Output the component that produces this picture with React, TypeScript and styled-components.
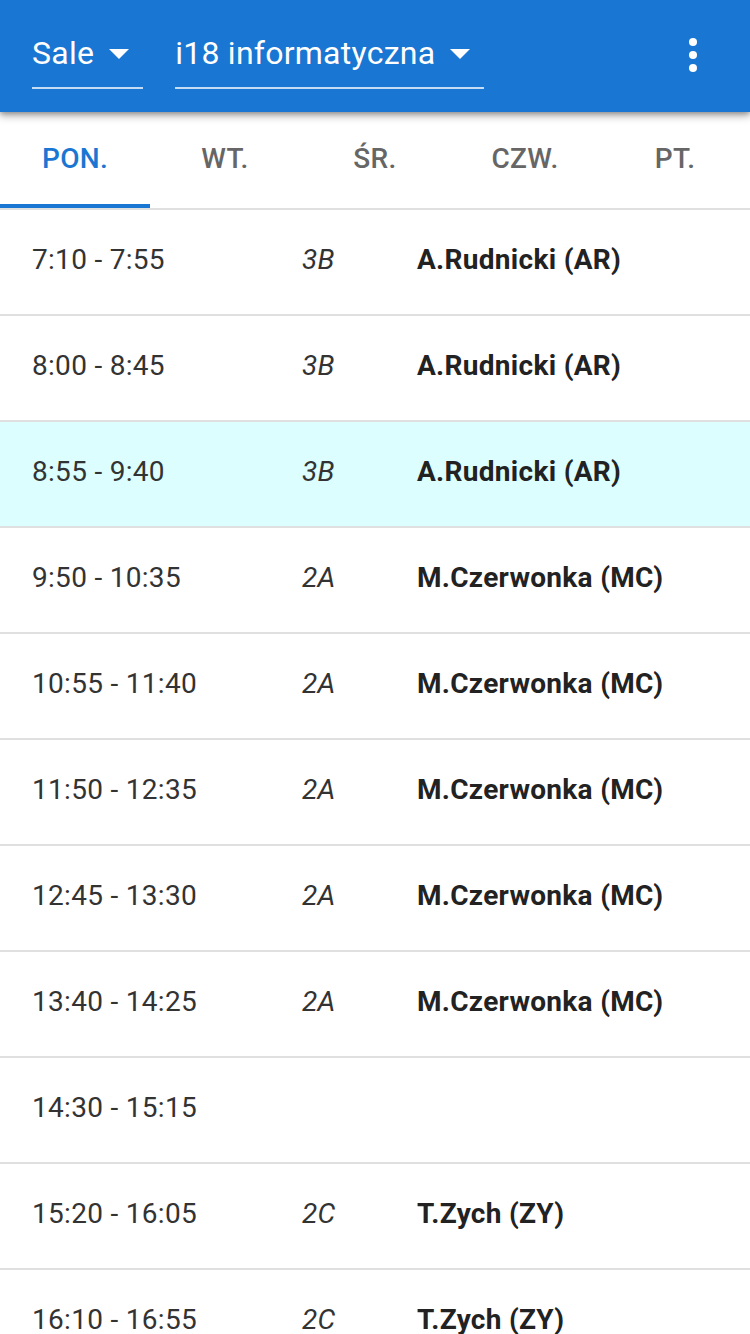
import React from "react";
import styled, { createGlobalStyle } from "styled-components";

const Global = createGlobalStyle`
  html, body { margin: 0; padding: 0; background: #fff; }
  body { font-family: Roboto, "Noto Sans", Arial, sans-serif; -webkit-font-smoothing: antialiased; }
  * { box-sizing: border-box; }
`;

const Page = styled.div`
  width: 750px;
  display: flex;
  flex-direction: column;
`;

const AppBar = styled.header`
  position: relative;
  z-index: 2;
  height: 112px;
  background: #1976d2;
  display: flex;
  align-items: center;
  padding: 0 32px;
  gap: 32px;
  box-shadow: 0 4px 8px rgba(0, 0, 0, 0.3), 0 2px 4px rgba(0, 0, 0, 0.2);
`;

const Select = styled.div`
  display: flex;
  align-items: center;
  gap: 15px;
  height: 60px;
  margin-top: 6px;
  border-bottom: 2px solid rgba(255, 255, 255, 0.75);
  padding-right: 14px;
  padding-bottom: 10px;
  color: #fff;
  font-size: 32px;
  font-weight: 400;
  letter-spacing: 0.25px;
`;

const Arrow = styled.span`
  width: 0;
  height: 0;
  border-left: 10px solid transparent;
  border-right: 10px solid transparent;
  border-top: 10px solid #fff;
  margin-top: 2px;
`;

const Spacer = styled.div`
  flex: 1;
`;

const Kebab = styled.div`
  display: flex;
  flex-direction: column;
  gap: 5px;
  margin-right: 21px;
  margin-top: -2px;
  span {
    width: 8px;
    height: 8px;
    border-radius: 50%;
    background: #fff;
  }
`;

const Tabs = styled.nav`
  display: flex;
  height: 98px;
  border-bottom: 2px solid #e0e0e0;
`;

const Tab = styled.div<{ $active?: boolean }>`
  position: relative;
  width: 150px;
  display: flex;
  align-items: center;
  justify-content: center;
  padding-bottom: 4px;
  font-size: 28px;
  font-weight: 500;
  letter-spacing: 0.3px;
  color: ${(p) => (p.$active ? "#1976d2" : "#666")};
  &::after {
    content: "";
    position: absolute;
    left: 0;
    right: 0;
    bottom: 0;
    height: 4px;
    background: ${(p) => (p.$active ? "#1976d2" : "transparent")};
  }
`;

const Row = styled.div<{ $current?: boolean }>`
  display: grid;
  grid-template-columns: 270px 115px 1fr;
  align-items: center;
  height: 106px;
  padding: 0 32px 6px 32px;
  border-bottom: 2px solid #e0e0e0;
  background: ${(p) => (p.$current ? "#dcfefe" : "#fff")};
  font-size: 28px;
  letter-spacing: 0.3px;
  color: #333;
`;

const Time = styled.span`
  font-weight: 400;
  color: #333;
`;

const Klass = styled.span`
  font-style: italic;
  color: #333;
`;

const Teacher = styled.span`
  font-weight: 700;
  color: #222;
`;

const lessons = [
  ["7:10 - 7:55", "3B", "A.Rudnicki (AR)"],
  ["8:00 - 8:45", "3B", "A.Rudnicki (AR)"],
  ["8:55 - 9:40", "3B", "A.Rudnicki (AR)"],
  ["9:50 - 10:35", "2A", "M.Czerwonka (MC)"],
  ["10:55 - 11:40", "2A", "M.Czerwonka (MC)"],
  ["11:50 - 12:35", "2A", "M.Czerwonka (MC)"],
  ["12:45 - 13:30", "2A", "M.Czerwonka (MC)"],
  ["13:40 - 14:25", "2A", "M.Czerwonka (MC)"],
  ["14:30 - 15:15", "", ""],
  ["15:20 - 16:05", "2C", "T.Zych (ZY)"],
  ["16:10 - 16:55", "2C", "T.Zych (ZY)"],
];

export default function App() {
  return (
    <Page>
      <Global />
      <AppBar>
        <Select>
          Sale <Arrow />
        </Select>
        <Select>
          i18 informatyczna <Arrow />
        </Select>
        <Spacer />
        <Kebab>
          <span />
          <span />
          <span />
        </Kebab>
      </AppBar>
      <Tabs>
        <Tab $active>PON.</Tab>
        <Tab>WT.</Tab>
        <Tab>ŚR.</Tab>
        <Tab>CZW.</Tab>
        <Tab>PT.</Tab>
      </Tabs>
      {lessons.map(([t, k, n], i) => (
        <Row key={i} $current={i === 2}>
          <Time>{t}</Time>
          <Klass>{k}</Klass>
          <Teacher>{n}</Teacher>
        </Row>
      ))}
    </Page>
  );
}
